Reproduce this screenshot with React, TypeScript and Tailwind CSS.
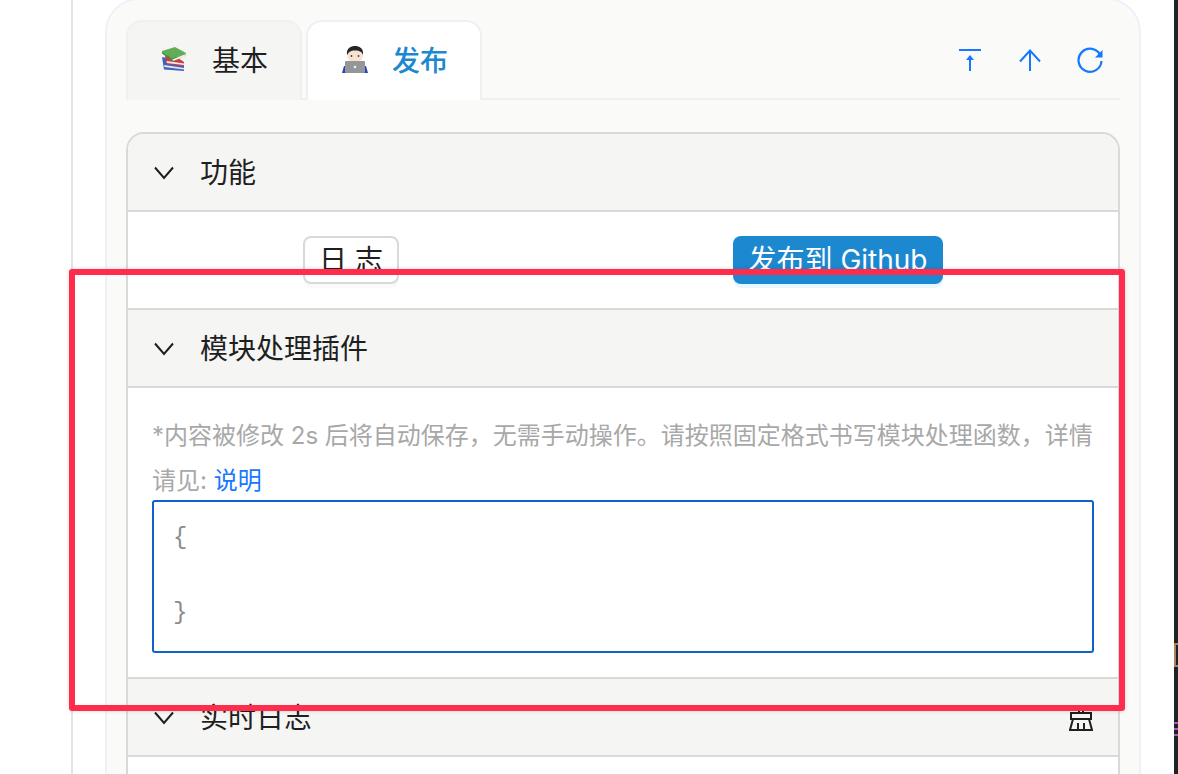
const FONT = "font-['Inter','Noto_Sans_CJK_SC',sans-serif]";

function Books() {
  return (
    <svg width="26" height="26" viewBox="0 0 26 26" className="-mt-[3px] shrink-0">
      <path d="M0 10l5 1 17 8v5L2 22.500z" fill="#3f63b8" />
      <path d="M2 18l20 3v1.500L2.500 20z" fill="#e8e8ee" />
      <path d="M3 9l7-2 12 8v4L5 17z" fill="#d8373c" />
      <path d="M4.500 14l17.500 2.500V18L5 16z" fill="#f4eeee" />
      <path d="M0 4L13 0l11 6-14 6z" fill="#5fae55" />
      <path d="M0 4l10 8 14-6-1 3-12 5.500L0 6.500z" fill="#3f8f45" />
      <path d="M10.500 12.500L23.500 7l-1 2.500-11.500 4.500z" fill="#f1f4ee" />
    </svg>
  );
}

function Technologist() {
  return (
    <svg width="26" height="28" viewBox="0 0 26 28" className="-mt-[3px] shrink-0">
      <path d="M0 27l2-7h22l2 7z" fill="#2b45b5" />
      <circle cx="13" cy="9" r="8" fill="#f8e2d2" />
      <path d="M5 9C4 2 9 0 13 0s9 2 8 9c-1-3-3-4.500-8-4.500S7 6 5 9z" fill="#23262b" />
      <circle cx="9.500" cy="10" r="0.900" fill="#4a3a30" />
      <circle cx="16.500" cy="10" r="0.900" fill="#4a3a30" />
      <rect x="3" y="15" width="20" height="12" rx="1" fill="#94969a" />
      <circle cx="13" cy="21" r="1.300" fill="#eceef0" />
    </svg>
  );
}

function Chevron() {
  return (
    <svg width="20" height="14" viewBox="0 0 20 14" fill="none" className="shrink-0">
      <path d="M1 1.500l9 10.500 9-10.500" stroke="#1f1f1f" strokeWidth="2" />
    </svg>
  );
}

function Section({ title, extra, children }: { title: string; extra?: React.ReactNode; children?: React.ReactNode }) {
  return (
    <>
      <div className="flex h-[78px] items-center justify-between border-b-2 border-[#d9d9d9] bg-[#f5f5f4] pl-[26px] pr-[25px] pt-[2px]">
        <div className="flex items-center gap-[26px]">
          <Chevron />
          <span className="text-[28px] leading-[44px] text-[#1f1f1f]">{title}</span>
        </div>
        {extra}
      </div>
      {children}
    </>
  );
}

export default function App() {
  return (
    <div className={`${FONT} flex h-[774px] w-full overflow-hidden bg-white`}>
      <div className="w-[71px] shrink-0 bg-white" />
      <div className="flex flex-1 overflow-hidden border-l-2 border-[#e4e4e4] pl-[32px]">
        <div className="-mt-[2px] h-[900px] w-[1036px] shrink-0 rounded-t-[34px] border-2 border-[#f0f0fa] bg-[#fafaf9] px-[19px] pt-[20px]">
          <div className="flex h-[80px] items-stretch justify-between border-b-2 border-[#f0f0f0]">
            <div className="flex gap-[4px]">
              <div className="-mb-[2px] flex h-[80px] w-[176px] items-center gap-[24px] rounded-t-[16px] border-2 border-b-0 border-[#f0f0f0] bg-[#f5f5f4] pl-[34px] text-[28px] text-[#1f1f1f]">
                <Books />
                <span>基本</span>
              </div>
              <div className="-mb-[2px] flex h-[80px] w-[176px] items-center gap-[24px] rounded-t-[16px] border-2 border-b-0 border-[#f0f0f0] bg-white pl-[34px] text-[28px] font-medium text-[#1c88cf]">
                <Technologist />
                <span>发布</span>
              </div>
            </div>
            <div className="flex items-center pr-[17px] pt-[2px]">
              <svg width="22" height="22" viewBox="0 0 22 22" fill="none" stroke="#1677ff">
                <path d="M0 1h22" strokeWidth="2" />
                <path d="M11 22V10" strokeWidth="2" />
                <path d="M7 11l4-5 4 5z" fill="#1677ff" strokeWidth="0" />
              </svg>
              <svg width="22" height="22" viewBox="0 0 22 22" fill="none" stroke="#1677ff" strokeWidth="2" className="ml-[38px]">
                <path d="M11 22V1.500" />
                <path d="M1 12.500L11 1.500l10 11" />
              </svg>
              <svg width="26" height="26" viewBox="0 0 26 26" fill="none" stroke="#1677ff" strokeWidth="2.200" className="ml-[36px]">
                <path d="M23.500 8.500A11.500 11.500 0 1 0 24.500 14" />
                <path d="M25.500 3v7.500H18z" fill="#1677ff" strokeWidth="0" />
              </svg>
            </div>
          </div>

          <div className="mt-[32px] overflow-hidden rounded-t-[18px] border-2 border-b-0 border-[#d9d9d9] bg-white">
            <Section title="功能">
              <div className="flex h-[98px] items-start justify-around border-b-2 border-[#d9d9d9] px-[8px] pt-[24px]">
                <button className="h-[48px] w-[96px] rounded-[8px] border-2 border-[#d9d9d9] bg-white text-[28px] leading-none text-[#1f1f1f] shadow-[0_4px_0_rgba(0,0,0,0.02)]">
                  日 志
                </button>
                <button className="h-[48px] w-[210px] rounded-[8px] bg-[#1c88cf] text-[28px] leading-none text-white shadow-[0_4px_0_#e6f7ff]">
                  发布到 Github
                </button>
              </div>
            </Section>
            <Section title="模块处理插件">
              <div className="flex h-[291px] flex-col border-b-2 border-[#d9d9d9] px-[24px] pt-[25px]">
                <p className="text-[24px] leading-[45px] text-[#a8a8a8]">
                  *内容被修改 2s 后将自动保存，无需手动操作。请按照固定格式书写模块处理函数，详情请见: <span className="text-[#1677ff]">说明</span>
                </p>
                <textarea
                  readOnly
                  value={"{\n\n}"}
                  className="mt-[-3px] h-[153px] w-full resize-none rounded-[3px] border-2 border-[#0f62c9] bg-white px-[19px] pt-[17px] font-['Liberation_Mono',monospace] text-[24px] leading-[37.500px] text-[#8c8c8c] outline-none"
                />
              </div>
            </Section>
            <Section
              title="实时日志"
              extra={
                <svg width="24" height="25" viewBox="0 0 24 25" fill="none" stroke="#1f1f1f" strokeWidth="2">
                  <path d="M10 1h4v6h-4z" />
                  <path d="M2 7h20v6H2z" />
                  <path d="M4 13L1 24h22l-3-11" />
                  <path d="M9 24v-7M15 24v-7" />
                </svg>
              }
            >
              <div className="h-[100px] bg-white" />
            </Section>
          </div>
        </div>
      </div>
      <div className="relative w-[4px] shrink-0 bg-[#1e2126]">
        <div className="absolute left-0 top-[643px] h-[24px] w-full border-y-2 border-l-2 border-[#a9825a]" />
        <div className="absolute left-0 top-[722px] h-[2px] w-full bg-[#a45fb0]" />
        <div className="absolute left-0 top-[728px] h-[2px] w-full bg-[#a45fb0]" />
        <div className="absolute left-0 top-[734px] h-[2px] w-full bg-[#a45fb0]" />
      </div>
      <div className="absolute left-[69px] top-[269px] h-[442px] w-[1056px] rounded-[3px] border-[6px] border-[#ff2d4b] shadow-[0_0_4px_rgba(0,0,0,0.15)]" />
    </div>
  );
}
